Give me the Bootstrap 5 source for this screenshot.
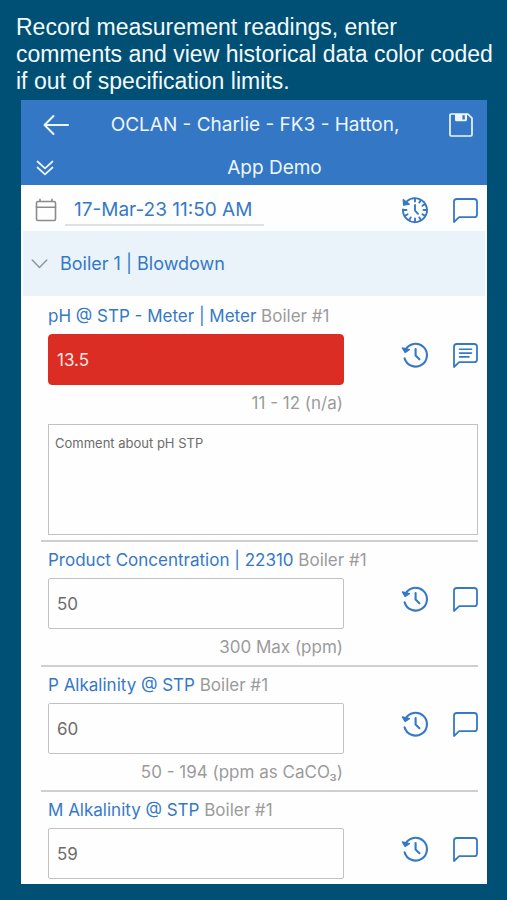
<!DOCTYPE html>
<html lang="en">
<head>
<meta charset="utf-8">
<meta name="viewport" content="width=device-width, initial-scale=1">
<title>App Demo - Measurement readings</title>
<link href="https://cdn.jsdelivr.net/npm/bootstrap@5.3.0/dist/css/bootstrap.min.css" rel="stylesheet">
<style>
  :root { --brand: #3579c6; --line: #cfcfcf; --box-line: #c2c2c2; --muted: #9b9b9b; }
  body { background: #005075; font-family: Inter, "Liberation Sans", sans-serif; }
  .intro { padding: 14px 8px 5px 16px; color: #f4fafc; font: 23px/27px "Liberation Sans", Arial, sans-serif; }
  .app-panel { margin: 0 20px 16px 21px; background: #fefefe; }
  .app-head { background: #3477c4; color: #eef5fd; font-size: 19px; line-height: 24px; }
  .head-main { height: 50px; padding: 0 14px 0 22px; }
  .head-sub { height: 35px; padding-left: 15px; }
  .app-title { font-size: 19px; line-height: 24px; font-weight: 400; }
  .icon-btn { padding: 0; border: 0; background: none; color: inherit; display: flex; align-items: center; justify-content: center; }
  .icon-btn svg, .date-row svg, .section-toggle svg { display: block; flex-shrink: 0; fill: none; stroke: currentColor; stroke-linecap: round; stroke-linejoin: round; }
  .date-row { height: 46px; padding: 4px 9px 0 14px; }
  .date-field { width: 199px; height: 32px; padding: 0 9px; border: 0; border-bottom: 2px solid #dfe1e4; background: none; color: var(--brand); font-size: 19px; line-height: 24px; border-radius: 0; }
  .section-toggle { height: 65px; margin: 0 2px; width: calc(100% - 4px); padding: 0 8px; border: 0; background: #eaf3fa; color: var(--brand); font-size: 18px; line-height: 24px; text-align: left; }
  .tools { gap: 24px; color: var(--brand); }
  .tools .icon-btn { width: 26px; height: 42px; }
  .reading { margin: 0 9px 0 20px; padding: 6px 0 6px 7px; border-top: 2px solid var(--line); font-size: 17px; line-height: 24px; }
  .reading:first-of-type { border-top: 0; padding-top: 8px; }
  .reading:last-of-type { padding-bottom: 5px; }
  .reading-label { display: block; margin-bottom: 6px; color: var(--muted); white-space: nowrap; }
  .reading-label b { color: var(--brand); font-weight: 400; }
  .reading-row { gap: 58px; }
  .value-box { height: 51px; padding: 0 8px; border: 1px solid var(--box-line); border-radius: 2px; background: #fefefe; color: #6c6c6c; font-size: 17px; line-height: 24px; }
  .value-box.out-of-spec { background: #db2d24; border-color: #db2d24; border-radius: 4px; color: #fbe9e4; }
  .limits { margin-top: 6px; padding-right: 1px; color: var(--muted); text-align: right; }
  .comment-box { height: 111px; margin: 9px 0 -1px; padding: 9px 6px; border: 1px solid var(--box-line); border-radius: 0; background: #fefefe; color: #6c6c6c; font-size: 13px; line-height: 18px; resize: none; }
</style>
</head>
<body>
<svg class="d-none" aria-hidden="true">
  <symbol id="i-history" viewBox="0 0 28 28">
    <path d="M4.4 9A11.4 11.4 0 1 1 3.6 17.4" stroke-width="2.1"/>
    <path d="M1.4 7 4.1 11.5 8.4 8.6Z" stroke-width="1.4" fill="currentColor"/>
    <path d="M14.6 8V14.6L18.4 18.2" stroke-width="2.1"/>
  </symbol>
  <symbol id="i-comment" viewBox="0 0 26 26">
    <path d="M2 25V4.8A2.8 2.8 0 0 1 4.8 2H22.2A2.8 2.8 0 0 1 25 4.8V17.4A2.8 2.8 0 0 1 22.2 20.2H7.2Z" stroke-width="1.8"/>
  </symbol>
</svg>
<p class="intro mb-0">Record measurement readings, enter comments and view historical data color coded if out of specification limits.</p>
<main class="app-panel">
  <header class="app-head">
    <div class="head-main d-flex align-items-center">
      <button class="icon-btn" type="button" aria-label="Back"><svg width="26" height="22" viewBox="0 0 26 22" stroke-width="2"><path d="M25 11H1.5M10.5 2 1.5 11 10.5 20"/></svg></button>
      <h1 class="app-title flex-fill text-center mb-0 pe-2">OCLAN - Charlie - FK3 - Hatton,</h1>
      <button class="icon-btn" type="button" aria-label="Save"><svg width="24" height="24" viewBox="0 0 24 24" stroke-width="1.7"><path d="M2.2 1H18.8L23 5.2V21.8A1.2 1.2 0 0 1 21.8 23H2.2A1.2 1.2 0 0 1 1 21.8V2.2A1.2 1.2 0 0 1 2.2 1Z"/><path fill="currentColor" fill-rule="evenodd" stroke="none" d="M6 1H18V6.7A1.6 1.6 0 0 1 16.4 8.3H7.6A1.6 1.6 0 0 1 6 6.7ZM13.4 2.2V6.6H15.8V2.2Z"/></svg></button>
    </div>
    <div class="head-sub d-flex align-items-center">
      <button class="icon-btn" type="button" aria-label="Expand details"><svg width="18" height="16" viewBox="0 0 18 16" stroke-width="1.7"><path d="M1.5 1.5 9 8.3 16.5 1.5M1.5 7.5 9 14.3 16.5 7.5"/></svg></button>
      <span class="flex-fill text-center ps-2">App Demo</span>
    </div>
  </header>
  <div class="date-row d-flex align-items-center">
    <label for="when" class="me-2" aria-label="Date and time"><svg width="22" height="24" viewBox="0 0 22 24" stroke-width="1.6" color="#8b8b8b"><rect x="1.5" y="3.5" width="19" height="19" rx="1.5"/><path d="M1.5 9.3H20.5M5 1.3V3.5M17 1.3V3.5"/></svg></label>
    <input id="when" class="date-field" type="text" value="17-Mar-23 11:50 AM">
    <div class="tools d-flex ms-auto">
      <button class="icon-btn" type="button" aria-label="Reading history"><svg width="28" height="28" viewBox="0 0 28 28"><path d="M5.6 5.6A12 12 0 1 1 2 13.4" stroke-width="1.9"/><path d="M2.2 3.5 2.6 9.2 8.4 8.2Z" stroke-width="1.2" fill="currentColor"/><path d="M14 2.5V5.5M14 22.5V25.5M22.5 14H25.5M2.5 14H5.5M18.3 6.6 19.6 4.4M21.4 9.7 23.6 8.4M21.4 18.3 23.6 19.6M18.3 21.4 19.6 23.6M9.7 21.4 8.4 23.6M6.6 18.3 4.4 19.6M14 9V14.6L17 17.8" stroke-width="1.9"/></svg></button>
      <button class="icon-btn" type="button" aria-label="Add comment"><svg width="26" height="26"><use href="#i-comment"/></svg></button>
    </div>
  </div>
  <button class="section-toggle d-flex align-items-center" type="button" aria-expanded="true"><svg class="me-2" width="17" height="12" viewBox="0 0 17 12" stroke-width="1.4" color="#8f9499"><path d="M1.2 2 8.5 9.5 15.8 2"/></svg><span class="ms-1">Boiler 1 | Blowdown</span></button>

  <section class="reading">
    <label class="reading-label" for="r1"><b>pH @ STP - Meter | Meter</b> Boiler #1</label>
    <div class="reading-row d-flex align-items-start">
      <div class="flex-fill"><input id="r1" class="value-box out-of-spec w-100 d-block" type="text" value="13.5"><div class="limits">11 - 12 (n/a)</div></div>
      <div class="tools d-flex">
        <button class="icon-btn" type="button" aria-label="History"><svg width="28" height="28"><use href="#i-history"/></svg></button>
        <button class="icon-btn" type="button" aria-label="View comment"><svg width="26" height="26" viewBox="0 0 26 26"><use href="#i-comment"/><path d="M7.5 7.3H19.5M7.5 11.1H19.5M7.5 14.9H17" stroke-width="1.6"/></svg></button>
      </div>
    </div>
    <textarea class="comment-box w-100 d-block" aria-label="Comment">Comment about pH STP</textarea>
  </section>

  <section class="reading">
    <label class="reading-label" for="r2"><b>Product Concentration | 22310</b> Boiler #1</label>
    <div class="reading-row d-flex align-items-start">
      <div class="flex-fill"><input id="r2" class="value-box w-100 d-block" type="text" value="50"><div class="limits">300 Max (ppm)</div></div>
      <div class="tools d-flex">
        <button class="icon-btn" type="button" aria-label="History"><svg width="28" height="28"><use href="#i-history"/></svg></button>
        <button class="icon-btn" type="button" aria-label="Add comment"><svg width="26" height="26"><use href="#i-comment"/></svg></button>
      </div>
    </div>
  </section>

  <section class="reading">
    <label class="reading-label" for="r3"><b>P Alkalinity @ STP</b> Boiler #1</label>
    <div class="reading-row d-flex align-items-start">
      <div class="flex-fill"><input id="r3" class="value-box w-100 d-block" type="text" value="60"><div class="limits">50 - 194 (ppm as CaCO₃)</div></div>
      <div class="tools d-flex">
        <button class="icon-btn" type="button" aria-label="History"><svg width="28" height="28"><use href="#i-history"/></svg></button>
        <button class="icon-btn" type="button" aria-label="Add comment"><svg width="26" height="26"><use href="#i-comment"/></svg></button>
      </div>
    </div>
  </section>

  <section class="reading">
    <label class="reading-label" for="r4"><b>M Alkalinity @ STP</b> Boiler #1</label>
    <div class="reading-row d-flex align-items-start">
      <div class="flex-fill"><input id="r4" class="value-box w-100 d-block" type="text" value="59"></div>
      <div class="tools d-flex">
        <button class="icon-btn" type="button" aria-label="History"><svg width="28" height="28"><use href="#i-history"/></svg></button>
        <button class="icon-btn" type="button" aria-label="Add comment"><svg width="26" height="26"><use href="#i-comment"/></svg></button>
      </div>
    </div>
  </section>
</main>
<script src="https://cdn.jsdelivr.net/npm/bootstrap@5.3.0/dist/js/bootstrap.bundle.min.js"></script>
</body>
</html>
